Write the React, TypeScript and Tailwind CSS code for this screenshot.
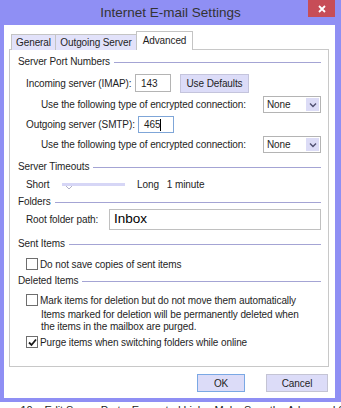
import React from "react";

const font = { fontFamily: '"Liberation Sans", Arial, sans-serif' };

const SectionHeader = ({ title }: { title: string }) => (
  <div className="flex items-center h-[14px] pl-[8px]">
    <span className="leading-none">{title}</span>
    <div className="flex-1 h-px bg-[#a4a4d4] ml-[4px]" />
  </div>
);

const Chevron = () => (
  <svg width="8" height="6" viewBox="0 0 8 6">
    <path d="M1 1.5 L4 4.5 L7 1.5" fill="none" stroke="#505070" strokeWidth="1.4" />
  </svg>
);

const Select = () => (
  <div className="ml-auto flex items-center w-[58px] h-[17px] border border-[#b4b4b4] bg-white">
    <span className="pl-[3px] flex-1 leading-none">None</span>
    <div className="w-[13px] h-[13px] mr-[1px] bg-[#dcdcf6] flex items-center justify-center">
      <Chevron />
    </div>
  </div>
);

const Checkbox = ({ checked }: { checked?: boolean }) => (
  <div className="w-[12px] h-[12px] border border-[#6e6e6e] bg-white flex items-center justify-center shrink-0">
    {checked && (
      <svg width="9" height="9" viewBox="0 0 9 9">
        <path d="M1 4.5 L3.5 7 L8 1.5" fill="none" stroke="#1a1a1a" strokeWidth="1.8" />
      </svg>
    )}
  </div>
);

export default function App() {
  return (
    <div
      className="w-[341px] h-[408px] bg-[#8f8ff4] flex flex-col overflow-hidden text-[10px] tracking-[-0.1px] text-[#1e1e1e]"
      style={font}
    >
      {/* title bar */}
      <div className="relative h-[25px] flex items-center justify-center">
        <span className="text-[13.5px] tracking-normal text-[#333] leading-none">Internet E-mail Settings</span>
        <div className="absolute right-[6px] top-0 w-[27px] h-[17px] bg-[#c74d57] flex items-center justify-center">
          <svg width="8" height="8" viewBox="0 0 8 8">
            <path d="M1 1 L7 7 M7 1 L1 7" stroke="white" strokeWidth="1.8" />
          </svg>
        </div>
      </div>

      {/* client area */}
      <div className="ml-[4px] mr-[6px] h-[373px] bg-white pl-[5px] pt-[6px] flex flex-col">
        {/* tabs */}
        <div className="flex items-end h-[19px] pl-[2px] relative z-10 -mb-px">
          <div className="h-[16px] bg-[#e2e2fa] border border-[#c4c4c4] border-b-0 flex items-center justify-center leading-none w-[45px]">
            General
          </div>
          <div className="h-[16px] bg-[#e2e2fa] border border-[#c4c4c4] border-b-0 border-l-0 flex items-center justify-center leading-none w-[81px]">
            Outgoing Server
          </div>
          <div className="h-[19px] bg-white border border-[#c4c4c4] border-b-0 flex items-center justify-center leading-none w-[57px] -ml-px">
            Advanced
          </div>
        </div>

        {/* panel */}
        <div className="w-[320px] h-[318px] border border-[#c8c8c8] flex flex-col pt-[5px] pr-[7px]">
          <SectionHeader title="Server Port Numbers" />
          <div className="flex items-center h-[18px] mt-[5px] pl-[16px]">
            <span className="w-[109px]">Incoming server (IMAP):</span>
            <div className="w-[36px] h-[18px] border border-[#b4b4b4] flex items-center pl-[5px]">143</div>
            <div className="ml-[9px] w-[69px] h-[19px] bg-[#dcdcf8] border border-[#c4c4dc] flex items-center justify-center">
              Use Defaults
            </div>
          </div>
          <div className="flex items-center h-[17px] mt-[4px] pl-[31px]">
            <span>Use the following type of encrypted connection:</span>
            <Select />
          </div>
          <div className="flex items-center h-[17px] mt-[3px] pl-[16px]">
            <span className="w-[112px]">Outgoing server (SMTP):</span>
            <div className="w-[36px] h-[17px] border border-[#7fa6d8] flex items-center pl-[5px]">
              465<span className="w-px h-[12px] bg-black" />
            </div>
          </div>
          <div className="flex items-center h-[17px] mt-[3px] pl-[31px]">
            <span>Use the following type of encrypted connection:</span>
            <Select />
          </div>

          <div className="mt-[7px]">
            <SectionHeader title="Server Timeouts" />
          </div>
          <div className="flex items-center h-[16px] mt-[2px] pl-[16px]">
            <span className="w-[36px]">Short</span>
            <div className="relative w-[63px] h-[3px] bg-[#d6d6f6]">
              <svg className="absolute left-[4px] top-[3px]" width="6" height="4" viewBox="0 0 6 4">
                <path d="M0 0 L3 3 L6 0" fill="none" stroke="#b0b0c8" strokeWidth="1" />
              </svg>
            </div>
            <span className="ml-[12px]">Long</span>
            <span className="ml-[8px]">1 minute</span>
          </div>

          <div className="mt-[3px]">
            <SectionHeader title="Folders" />
          </div>
          <div className="flex items-center h-[21px] pl-[16px]">
            <span className="w-[83px]">Root folder path:</span>
            <div className="w-[212px] h-[21px] border border-[#c0c0c0] flex items-center pl-[4px] text-[13.5px] tracking-normal text-black">
              Inbox
            </div>
          </div>

          <div className="mt-[7px]">
            <SectionHeader title="Sent Items" />
          </div>
          <div className="flex items-center h-[14px] mt-[6px] pl-[16px] gap-[2px]">
            <Checkbox />
            <span>Do not save copies of sent items</span>
          </div>

          <div className="mt-[3px]">
            <SectionHeader title="Deleted Items" />
          </div>
          <div className="flex items-center h-[14px] mt-[5px] pl-[16px] gap-[2px]">
            <Checkbox />
            <span>Mark items for deletion but do not move them automatically</span>
          </div>
          <div className="mt-[2px] pl-[31px] leading-[12px]">
            Items marked for deletion will be permanently deleted when
            <br />
            the items in the mailbox are purged.
          </div>
          <div className="flex items-center h-[14px] mt-[2px] pl-[16px] gap-[2px]">
            <Checkbox checked />
            <span>Purge items when switching folders while online</span>
          </div>
        </div>

        {/* buttons */}
        <div className="flex justify-end mt-[7px] pr-[7px] gap-[21px]">
          <div className="w-[48px] h-[18px] bg-[#dcdcf8] border border-[#7aa8e4] flex items-center justify-center">
            OK
          </div>
          <div className="w-[62px] h-[18px] bg-[#dcdcf8] border border-[#c4c4d4] flex items-center justify-center">
            Cancel
          </div>
        </div>
      </div>

      {/* caption strip */}
      <div className="mt-[4px] flex-1 bg-white overflow-hidden">
        <div className="text-[11px] leading-[11px] text-[#222] pl-[2px] pt-[3px] whitespace-nowrap">
          ure 10 – Edit Server Ports, Encrypted Links, Make Sure the Advanced Settings
        </div>
      </div>
    </div>
  );
}
